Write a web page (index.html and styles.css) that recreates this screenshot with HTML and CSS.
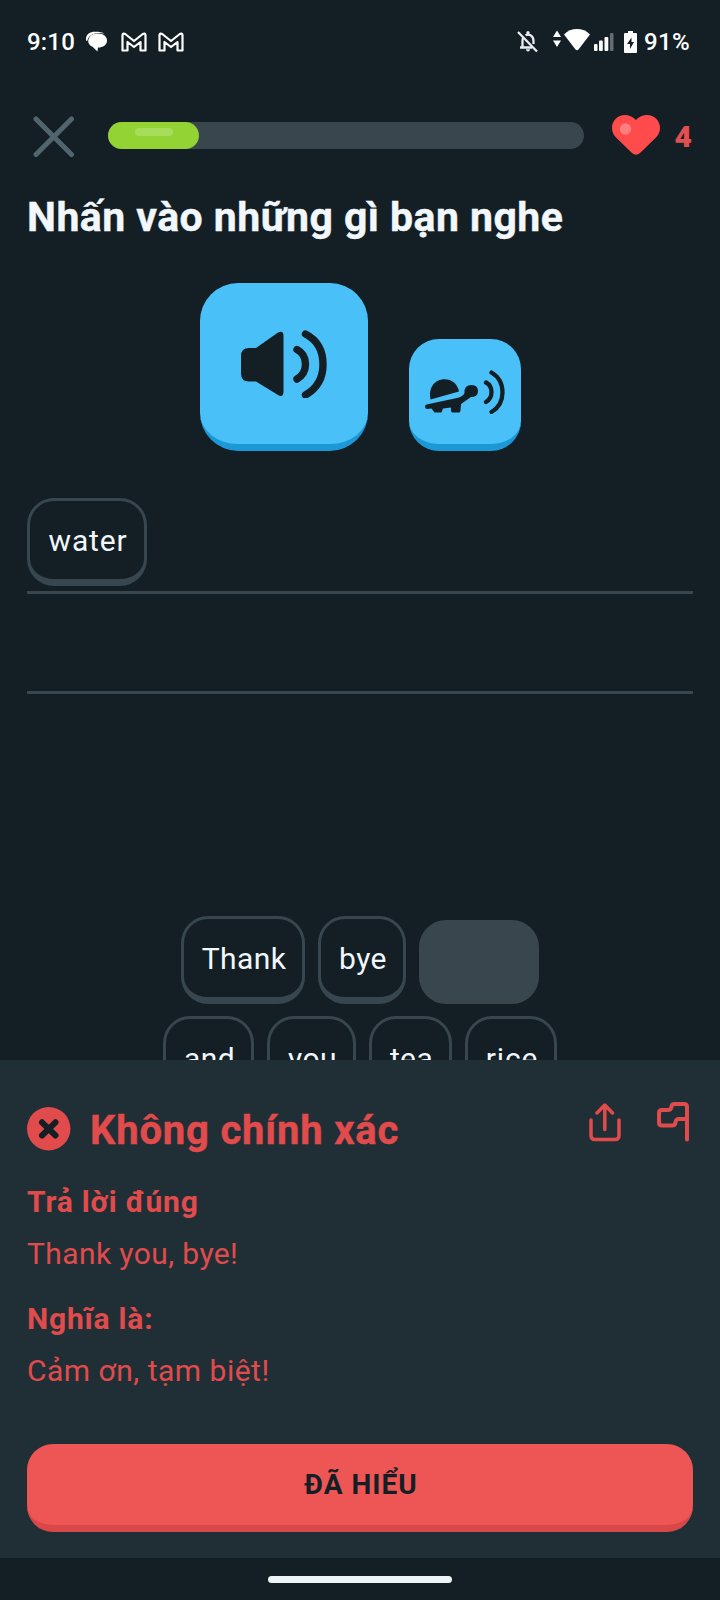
FILE: index.html
```html
<!DOCTYPE html>
<html lang="vi">
<head>
<meta charset="utf-8">
<title>Nhấn vào những gì bạn nghe</title>
<link rel="stylesheet" href="styles.css">
</head>
<body>
<div class="screen">
  <main class="lesson">
    <div class="status">
      <span class="clock">9:10</span>
      <svg class="chat" width="22" height="22" viewBox="0 0 22 22"><path d="M0 9.500C-.5 4 3 .8 9 .8C13.500 .8 16.500 1.200 18.500 2.800C12 1.200 5.500 2.200 2 7.500L1.200 10Z" fill="#fff"/><path d="M12 2.600C17.500 2.600 21 5.500 21 9.700C21 13.800 17 16.500 12 16.500L11.500 20.500L6.500 15.800C3.500 14.500 2.200 12.500 2.200 9.700C2.800 5.200 6.500 2.600 12 2.600Z" fill="#fff"/></svg>
      <svg class="mail" width="26" height="21" viewBox="0 0 26 21"><path d="M1.500 18.500V3Q2 .8 4.200 2L13 9L21.800 2Q24 .8 24.500 3V18.500H19.500V10L13 15L6.500 10V18.500Z" fill="none" stroke="#fff" stroke-width="2.200" stroke-linejoin="round"/></svg>
      <svg class="mail second" width="26" height="21" viewBox="0 0 26 21"><path d="M1.500 18.500V3Q2 .8 4.200 2L13 9L21.800 2Q24 .8 24.500 3V18.500H19.500V10L13 15L6.500 10V18.500Z" fill="none" stroke="#fff" stroke-width="2.200" stroke-linejoin="round"/></svg>
      <span class="grow"></span>
      <svg class="bell" width="22" height="22" viewBox="0 0 22 22"><g fill="none" stroke="#e9edee" stroke-width="2.300"><path d="M1 1L20 20.500"/><path d="M3 16.500H15M5.500 16V9.500Q5.500 7.500 6.500 6.500M8.500 4.300Q11 2.800 13.500 4.300Q16.500 6 16.500 10V13"/></g><circle cx="11" cy="1.800" r="1.700" fill="#e9edee"/><path d="M9 18.200H13Q12.800 20.500 11 20.500Q9.200 20.500 9 18.200Z" fill="#e9edee"/></svg>
      <svg class="wifi" width="37" height="22" viewBox="0 0 37 22" fill="#fff"><path d="M0 8L4 1.500L8 8ZM0 11.500H8L4 18Z"/><path d="M11 5.500C18-1.800 30-1.800 37 5.500L25.500 20.500Q24 22 22.500 20.500Z"/></svg>
      <svg class="signal" width="20" height="18" viewBox="0 0 20 18" fill="#fff"><rect y="11" width="3.500" height="7" rx="1"/><rect x="5" y="7.500" width="3.800" height="10.500" rx="1"/><rect x="10.500" y="4" width="3.800" height="14" rx="1"/><rect x="16" width="3.500" height="18" rx="1" opacity=".35"/></svg>
      <svg class="battery" width="13" height="22" viewBox="0 0 13 22"><path d="M1 2H4V0H9V2H12Q13 2 13 3V21Q13 22 12 22H1Q0 22 0 21V3Q0 2 1 2Z" fill="#fff"/><path d="M7.500 6.500L3 13H6V18L10 11H7.500Z" fill="#131f24"/></svg>
      <span class="percent">91%</span>
    </div>

    <div class="topbar">
      <svg class="close" width="42" height="42" viewBox="0 0 42 42"><path d="M3 3L38.500 38.500M38.500 3L3 38.500" stroke="#52646d" stroke-width="5" stroke-linecap="round"/></svg>
      <div class="progress"><div class="fill"><div class="shine"></div></div></div>
      <svg class="heart" width="48" height="41" viewBox="0 0 48 41"><path d="M24 5C28 .8 32 0 35 0C42.500 0 48 5.800 48 13C48 17.500 46 20.500 43.500 23L28 38Q24 41.500 20 38L4.500 23C2 20.500 0 17.500 0 13C0 5.800 5.500 0 13 0C17 0 20.500 1.500 24 5Z" fill="#ff4b4b"/><circle cx="13.500" cy="14" r="5.700" fill="#ff7f7f"/></svg>
      <span class="lives">4</span>
    </div>

    <h1 class="prompt">Nhấn vào những gì bạn nghe</h1>

    <div class="speakers">
      <div class="speaker normal">
        <svg width="86" height="68" viewBox="0 0 86 68"><path d="M8 18H15L37 2.500Q42.500 0 42.500 6V61.500Q42.500 68 37 65L15 51.500H8Q0 51.500 0 43.500V26Q0 18 8 18Z" fill="#131f24"/><path d="M56 19.500Q64.500 24 64.500 34Q64.500 44 56 49M64.500 4Q82 13 82 34.500Q82 55 64.500 65" fill="none" stroke="#131f24" stroke-width="7.400" stroke-linecap="round"/></svg>
      </div>
      <div class="speaker slow">
        <svg width="80" height="44" viewBox="0 0 80 44"><g fill="#131f24"><path d="M5.500 29.500C3 17.500 10 9.300 19.500 9.300C27 9.300 32.500 14 34 21.500Z"/><path d="M1.500 34.500L32 28Q38 26.500 39.500 23Q39 15 46.500 15Q53 15 53 21Q53 27 46 27L36 34L35.500 40.500Q35.300 42.500 34 42.500H27.500Q26 42.500 26 40.500V37.500L18 38.500L16.500 42.500H9.500L6.500 38.500L2 39Q0 38.500 0 36.500Q0 35 1.500 34.500Z"/></g><path d="M61 12.500Q66.500 15.500 66.500 22Q66.500 28.500 61 32M66.500 2.500Q77.500 9 77.500 22.500Q77.500 35.500 66.500 42" fill="none" stroke="#131f24" stroke-width="4.300" stroke-linecap="round"/></svg>
      </div>
    </div>

    <div class="answer">
      <div class="line"><div class="token w-water">water</div></div>
      <div class="line"></div>
    </div>

    <div class="bank">
      <div class="bank-row">
        <div class="token w-thank">Thank</div>
        <div class="token w-bye">bye</div>
        <div class="used"></div>
      </div>
      <div class="bank-row">
        <div class="token w-and">and</div>
        <div class="token w-you">you</div>
        <div class="token w-tea">tea</div>
        <div class="token w-rice">rice</div>
      </div>
    </div>
  </main>

  <section class="result">
    <div class="result-head">
      <svg class="wrong" width="44" height="44" viewBox="0 0 44 44"><circle cx="21.700" cy="21.700" r="21.700" fill="#e14b4c"/><path d="M15 15.300L28.500 28.500M28.500 15.300L15 28.500" stroke="#131f24" stroke-width="6" stroke-linecap="round"/></svg>
      <h2 class="verdict">Không chính xác</h2>
      <svg class="share" width="32" height="39" viewBox="0 0 32 39" fill="none" stroke="#e14b4c" stroke-width="3.500" stroke-linecap="round" stroke-linejoin="round"><path d="M2 17V32.500Q2 36.500 6 36.500H26Q30 36.500 30 32.500V17M15.800 26.500V2.500M8 10L15.800 2L23.500 10"/></svg>
      <svg class="flag" width="33" height="40" viewBox="0 0 33 40" fill="none" stroke="#e14b4c" stroke-width="4" stroke-linecap="round" stroke-linejoin="round"><path d="M30 37.500V5Q30 2 27 2H17.500Q14.500 2 14.500 5Q14 8 11 8H5Q2 8 2 11V20.500Q2 23.500 5 23.500H15Q18.500 23.500 18.500 20Q19 17 22 17H29"/></svg>
    </div>
    <h3 class="label answer-label">Trả lời đúng</h3>
    <p class="text answer-text">Thank you, bye!</p>
    <h3 class="label meaning-label">Nghĩa là:</h3>
    <p class="text meaning-text">Cảm ơn, tạm biệt!</p>
    <div class="confirm">ĐÃ HIỂU</div>
  </section>

  <div class="navbar"><div class="handle"></div></div>
</div>
</body>
</html>
```

FILE: styles.css
```css
* { box-sizing: border-box; }
body { margin: 0; background: #131f24; font-family: Roboto, "Noto Sans", sans-serif; }
h1, h2, h3, p { margin: 0; white-space: nowrap; }
svg { display: block; flex: none; }

.screen { width: 720px; height: 1600px; display: flex; flex-direction: column; overflow: hidden; }
.lesson { height: 1060px; padding: 0 27px; overflow: hidden; flex: none; }

.status { height: 84px; display: flex; align-items: center; color: #fff; font-size: 24px; font-weight: 500; padding-right: 4px; }
.grow { flex: 1; }
.clock { width: 59px; letter-spacing: .2px; }
.mail { margin-left: 13px; }
.mail.second { margin-left: 11px; }
.bell { margin-right: 14px; }
.wifi { margin: 0 4px 4px 0; }
.signal { margin-right: 10px; }
.battery { margin-right: 7px; }
.percent { width: 45px; letter-spacing: .3px; }

.topbar { height: 103px; display: flex; align-items: center; }
.close { margin: 3px 33px 0 6px; }
.progress { width: 476px; height: 27px; border-radius: 14px; background: #3a464e; }
.fill { width: 91px; height: 27px; padding: 6px 0 0 27px; border-radius: 14px; background: #93d333; }
.shine { width: 38px; height: 8px; border-radius: 4px; background: #a8dc5b; }
.heart { margin-left: 28px; }
.lives { flex: 1; padding: 2px 1px 0 0; text-align: right; color: #e14f50; font-size: 30px; font-weight: 900; }

.prompt { height: 60px; line-height: 60px; color: #f1f7fb; font-size: 41px; font-weight: 700; letter-spacing: .45px; -webkit-text-stroke: .4px #f1f7fb; }

.speakers { display: flex; justify-content: center; align-items: flex-end; gap: 41px; height: 168px; margin-top: 36px; }
.speaker { display: flex; align-items: center; justify-content: center; background: #49c0f8; border-bottom: 7px solid #1c98d6; }
.normal { width: 168px; height: 168px; border-radius: 38px; }
.slow { width: 112px; height: 112px; border-radius: 30px; }

.answer { margin-top: 47px; }
.line { height: 100px; border-bottom: 3px solid #37464f; }
.line:first-child { height: 96px; }

.token { height: 88px; padding: 1px 0 0 2px; border: 3px solid #37464f; border-bottom-width: 7px; border-radius: 27px; color: #f1f7fb; font-size: 30px; line-height: 78px; text-align: center; letter-spacing: .4px; }
.w-water { width: 120px; letter-spacing: .8px; }
.w-thank { width: 124px; }
.w-bye { width: 88px; }
.w-and { width: 91px; }
.w-you { width: 89px; }
.w-tea { width: 83px; }
.w-rice { width: 92px; letter-spacing: .8px; }
.bank { display: flex; flex-direction: column; gap: 12px; margin-top: 222px; }
.bank-row { display: flex; justify-content: center; gap: 13px; }
.used { width: 120px; height: 84px; margin-top: 4px; border-radius: 27px; background: #3a464e; }

.result { height: 498px; flex: none; padding: 39px 27px 0; background: #202f36; color: #e14b4c; }
.result-head { display: flex; height: 60px; }
.wrong { margin-top: 8px; }
.verdict { flex: 1; margin: 2px 0 0 19px; height: 60px; line-height: 60px; font-size: 40px; font-weight: 700; letter-spacing: .8px; -webkit-text-stroke: .4px #e14b4c; }
.share { margin: 4px 36px 0 0; }
.flag { margin: 3px 3px 0 0; }
.label, .text { height: 40px; line-height: 40px; font-size: 30px; }
.label { font-weight: 700; letter-spacing: .8px; }
.text { font-weight: 400; letter-spacing: .4px; }
.answer-label { margin-top: 23px; }
.answer-text { margin-top: 12px; }
.meaning-label { margin-top: 25px; }
.meaning-text { margin-top: 12px; letter-spacing: .5px; }
.confirm { height: 88px; margin-top: 53px; padding-left: 2px; border-radius: 26px; border-bottom: 7px solid #d84848; background: #ee5555; color: #131f24; font-size: 28px; font-weight: 700; line-height: 81px; text-align: center; letter-spacing: 1px; }

.navbar { flex: 1; display: flex; justify-content: center; padding-top: 18px; }
.handle { width: 184px; height: 7px; border-radius: 4px; background: #eef3f5; }
```
